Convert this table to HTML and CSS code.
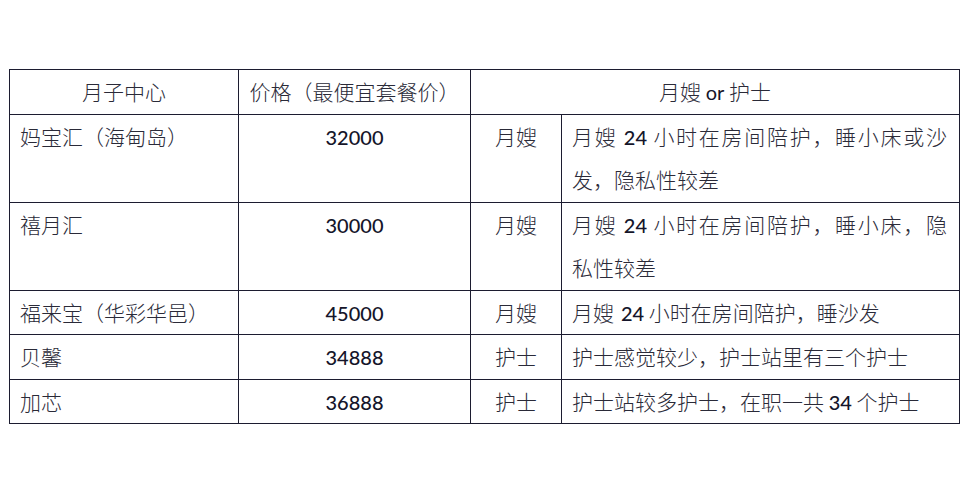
FILE: index.html
```html
<!DOCTYPE html>
<html lang="zh">
<head>
<meta charset="utf-8">
<link rel="stylesheet" href="styles.css">
</head>
<body>
<div class="page">
<table class="grid">
  <colgroup>
    <col class="c1"><col class="c2"><col class="c3"><col class="c4">
  </colgroup>
  <tr class="head">
    <td class="center">月子中心</td>
    <td class="center">价格（最便宜套餐价）</td>
    <td class="center" colspan="2">月嫂 <span class="lat">or</span> 护士</td>
  </tr>
  <tr>
    <td class="left">妈宝汇（海甸岛）</td>
    <td class="center"><span class="num">32000</span></td>
    <td class="center">月嫂</td>
    <td class="left"><span class="jline">月嫂 <span class="num">24</span> 小时在房间陪护，睡小床或沙</span>发，隐私性较差</td>
  </tr>
  <tr>
    <td class="left">禧月汇</td>
    <td class="center"><span class="num">30000</span></td>
    <td class="center">月嫂</td>
    <td class="left"><span class="jline">月嫂 <span class="num">24</span> 小时在房间陪护，睡小床，隐</span>私性较差</td>
  </tr>
  <tr>
    <td class="left">福来宝（华彩华邑）</td>
    <td class="center"><span class="num">45000</span></td>
    <td class="center">月嫂</td>
    <td class="left">月嫂<span class="num gap">24</span> 小时在房间陪护，睡沙发</td>
  </tr>
  <tr>
    <td class="left">贝馨</td>
    <td class="center"><span class="num">34888</span></td>
    <td class="center">护士</td>
    <td class="left">护士感觉较少，护士站里有三个护士</td>
  </tr>
  <tr>
    <td class="left">加芯</td>
    <td class="center"><span class="num">36888</span></td>
    <td class="center">护士</td>
    <td class="left">护士站较多护士，在职一共 <span class="num">34</span> 个护士</td>
  </tr>
</table>
</div>
</body>
</html>
```
FILE: styles.css
```css
html, body {
  margin: 0;
  padding: 0;
  background: #ffffff;
}
.page {
  padding: 69px 0 0 9px;
}
.grid {
  border-collapse: collapse;
  table-layout: fixed;
  width: 950px;
  font-family: "Noto Sans CJK SC", "Noto Sans", sans-serif;
  font-weight: 300;
  font-size: 21px;
  color: #2a2a38;
}
.c1 { width: 229px; }
.c2 { width: 232px; }
.c3 { width: 91px; }
.c4 { width: 398px; }
.grid td {
  border: 1.5px solid #1c1c30;
  height: 44px;
  line-height: 43.5px;
  padding: 0 10px;
  vertical-align: top;
  white-space: nowrap;
  box-sizing: border-box;
}
.center { text-align: center; }
.left { text-align: left; }
.jline {
  display: block;
  white-space: normal;
  text-align: justify;
  text-align-last: justify;
  margin-right: 2px;
}
.num, .lat {
  font-family: "Lato", "Open Sans", sans-serif;
  font-size: 20px;
  line-height: 1;
  font-weight: 500;
  color: #15152a;
}
.lat { font-weight: 400; }
.gap { margin-left: 7px; }
```
